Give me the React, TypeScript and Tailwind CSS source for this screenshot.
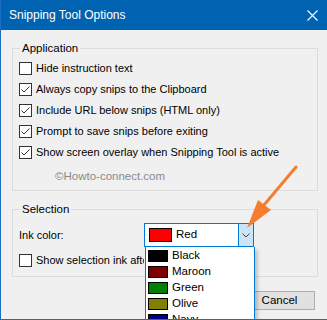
import React from 'react';

const font = { fontFamily: '"Liberation Sans", Arial, sans-serif' };

const options = [
  { label: 'Hide instruction text', checked: false },
  { label: 'Always copy snips to the Clipboard', checked: true },
  { label: 'Include URL below snips (HTML only)', checked: true },
  { label: 'Prompt to save snips before exiting', checked: true },
  { label: 'Show screen overlay when Snipping Tool is active', checked: true },
];

const colors = [
  { name: 'Black', hex: '#000000' },
  { name: 'Maroon', hex: '#800000' },
  { name: 'Green', hex: '#008000' },
  { name: 'Olive', hex: '#808000' },
  { name: 'Navy', hex: '#000080' },
];

function Checkbox({ checked }: { checked: boolean }) {
  return (
    <span className="w-[13px] h-[13px] shrink-0 border border-[#333333] bg-white flex items-center justify-center">
      {checked && (
        <svg width="11" height="11" viewBox="0 0 11 11">
          <path d="M1.5 5.5 L4 8 L9.5 2.5" fill="none" stroke="#333" strokeWidth="1" />
        </svg>
      )}
    </span>
  );
}

export default function App() {
  return (
    <div
      className="relative w-[327px] h-[320px] overflow-hidden bg-[#f0f0f0] border-l border-b border-[#1a6fc0] text-[11px] text-black"
      style={font}
    >
      <div className="h-[30px] bg-[#0063b1] flex items-center justify-between pl-[8px] pr-[9px] text-white text-[12px]">
        <span>Snipping Tool Options</span>
        <svg width="11" height="11" viewBox="0 0 11 11">
          <path d="M0.5 0.5 L10.5 10.5 M10.5 0.5 L0.5 10.5" stroke="#fff" strokeWidth="1.1" />
        </svg>
      </div>

      <div className="pl-[11px] w-[317px]">
        <fieldset className="mt-[10px] border border-[#dcdcdc] px-[6px] pt-[2px] pb-[6px]">
          <legend className="ml-[1px] px-[2px] leading-[16px] text-[11.5px]">Application</legend>
          {options.map((o) => (
            <div key={o.label} className="h-[21px] flex items-center gap-[4px] whitespace-nowrap">
              <Checkbox checked={o.checked} />
              <span>{o.label}</span>
            </div>
          ))}
          <div className="mt-[5px] h-[16px] pl-[36px] text-[11.5px] leading-[16px] text-[#8a8a8a]">
            ©Howto-connect.com
          </div>
        </fieldset>

        <fieldset className="mt-[10px] border border-[#dcdcdc] px-[6px] pt-[6px] pb-[9px]">
          <legend className="ml-[1px] px-[2px] leading-[16px] text-[11.5px]">Selection</legend>
          <div className="flex items-center h-[24px]">
            <span className="w-[125px]">Ink color:</span>
            <div className="w-[110px] h-[24px] border border-[#0078d7] bg-white flex items-center">
              <span className="ml-[4px] w-[23px] h-[14px] border border-black bg-[#ff0000]" />
              <span className="ml-[4px] flex-1 text-[11.5px]">Red</span>
              <span className="w-[15px] h-full bg-[#cce4f7] border-l border-[#0078d7] flex items-center justify-center">
                <svg width="8" height="5" viewBox="0 0 8 5">
                  <path d="M0.5 0.5 L4 4 L7.5 0.5" fill="none" stroke="#444" strokeWidth="1" />
                </svg>
              </span>
            </div>
          </div>
          <div className="mt-[7px] flex items-center gap-[4px] h-[13px]">
            <Checkbox checked={false} />
            <span className="w-[108px] overflow-hidden whitespace-nowrap">Show selection ink after snips are captured</span>
          </div>
        </fieldset>

        <div className="mt-[14px] flex justify-end pr-[3px]">
          <button className="w-[75px] h-[19px] border border-[#adadad] bg-[#e1e1e1] text-[11.5px] leading-none pl-[4px]">
            Cancel
          </button>
        </div>
      </div>

      <div className="absolute left-[144px] top-[247px] w-[110px] h-[73px] overflow-hidden border border-t-0 border-b-0 border-[#0078d7] bg-white pt-[1px] shadow-[3px_3px_3px_rgba(0,0,0,0.18)]">
        {colors.map((c) => (
          <div key={c.name} className="h-[16px] flex items-center">
            <span className="ml-[2px] w-[20px] h-[12px] border border-black" style={{ backgroundColor: c.hex }} />
            <span className="ml-[4px] text-[11.5px]">{c.name}</span>
          </div>
        ))}
      </div>

      <svg className="absolute left-0 top-0 pointer-events-none" width="327" height="320" viewBox="0 0 327 320">
        <path d="M295 167 L263 205" stroke="#f47d30" strokeWidth="3" strokeLinecap="round" />
        <path d="M246 228 L257 200 L270 210 Z" fill="#f47d30" />
      </svg>
    </div>
  );
}
